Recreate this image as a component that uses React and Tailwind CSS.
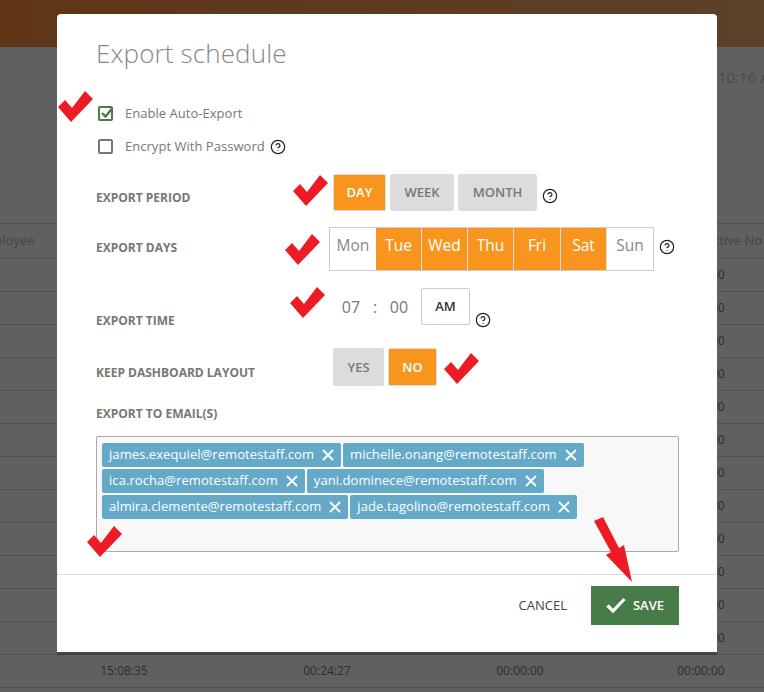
// Modal "Export schedule" sobre la tabla oscurecida
import { CircleHelp, X } from "lucide-react";

const DAYS = [
  { label: "Mon", on: false, w: "w-[46px]" },
  { label: "Tue", on: true, w: "w-[46px]" },
  { label: "Wed", on: true, w: "w-[46px]" },
  { label: "Thu", on: true, w: "w-[46px]" },
  { label: "Fri", on: true, w: "w-[47px]" },
  { label: "Sat", on: true, w: "w-[46px]" },
  { label: "Sun", on: false, w: "flex-1" },
];

const EMAILS = [
  "james.exequiel@remotestaff.com",
  "michelle.onang@remotestaff.com",
  "ica.rocha@remotestaff.com",
  "yani.dominece@remotestaff.com",
  "almira.clemente@remotestaff.com",
  "jade.tagolino@remotestaff.com",
];

const ROWS = Array.from({ length: 12 });

function Help({ className = "" }) {
  return <CircleHelp size={16} strokeWidth={1.8} className={`text-[#222] shrink-0 ${className}`} />;
}

// Marcas rojas dibujadas encima de la captura
function RedTick({ className }) {
  return (
    <svg width="35" height="31" viewBox="0 0 35 31" className={`absolute ${className}`}>
      <polygon points="0,16 7,9 14,17 27,0 35,8 13,31" fill="#ed1c24" />
    </svg>
  );
}

function Label({ children, className = "" }) {
  return <div className={`text-[12px] leading-4 font-bold text-[#777] ${className}`}>{children}</div>;
}

function Toggle({ children, on, className = "" }) {
  return (
    <div
      className={`flex items-center justify-center rounded-[2px] text-[13px] font-semibold border ${
        on ? "bg-[#f8951f] text-white border-[#dddddd]" : "bg-[#dcdcdc] text-[#777] border-[#dcdcdc]"
      } ${className}`}
    >
      {children}
    </div>
  );
}

function Tag({ email }) {
  return (
    <div className="h-6 flex items-center gap-[5px] pl-[7px] pr-[4px] bg-[#65a9c9] rounded-[2px] text-white text-[13px] leading-6 tracking-[0.07px]">
      <span className="-mt-[3px]">{email}</span>
      <X size={18} strokeWidth={2.4} />
    </div>
  );
}

export default function App() {
  return (
    <div className="relative w-[764px] h-[692px] overflow-hidden bg-[#606060] font-['Open_Sans',sans-serif]">
      {/* Pagina de fondo */}
      <div className="h-[47px] bg-gradient-to-r from-[#5f3516] to-[#5c4028]" />
      <div className="h-[125px] border-b border-[#5a5a5a] text-right pt-[19px] -mr-[19px] text-[15px] leading-[22px] text-[#4a4a4a]">
        10:16 AM
      </div>
      <div className="h-[51px]" />
      <div className="h-[36px] flex justify-between items-center border-y border-[#505050] text-[13px] text-[#444] -ml-[25px] -mr-[22px] pr-[24px]">
        <span>Employee</span>
        <span>Active No</span>
      </div>
      {ROWS.map((_, i) => (
        <div key={i} className="h-[33px] border-b border-[#505050]">
          <div className="grid grid-cols-[248px_158px_228px_134px] text-center items-center h-full text-[12px] text-[#2c2c2c]">
            <span />
            <span />
            <span />
            <span>00:00:00</span>
          </div>
        </div>
      ))}
      <div className="h-[33px] border-b border-[#505050] grid grid-cols-[248px_158px_228px_134px] text-center items-center text-[12px] text-[#2c2c2c]">
        <span>15:08:35</span>
        <span>00:24:27</span>
        <span>00:00:00</span>
        <span>00:00:00</span>
      </div>

      {/* Modal */}
      <div className="absolute left-[57px] top-[14px] w-[660px] h-[638px] bg-white rounded-t-[4px] shadow-[0_3px_0_rgba(0,0,0,0.25)]">
        <div className="h-[83px] pl-[39px] pt-[21px] text-[26px] leading-9 font-light text-[#888] tracking-[0.13px]">Export schedule</div>

        <div className="pl-[41px] h-[33px] flex items-center gap-3 text-[13px] text-[#777] tracking-[0.03px]">
          <div className="relative w-[15px] h-[15px] border-2 border-[#477c48] rounded-[2px]">
            <svg width="16" height="14" viewBox="0 0 16 14" className="absolute -left-[1px] -top-[2px]">
              <path d="M3 7 L6.5 10.5 L13.5 2" fill="none" stroke="#477c48" strokeWidth="2.4" />
            </svg>
          </div>
          <span>Enable Auto-Export</span>
        </div>
        <div className="pl-[41px] h-[33px] flex items-center gap-3 text-[13px] text-[#777] tracking-[0.03px]">
          <div className="w-[15px] h-[15px] border-2 border-[#777] rounded-[2px]" />
          <span>Encrypt With Password</span>
          <Help className="-ml-[7px]" />
        </div>

        {/* Periodo */}
        <div className="mt-[11px] pl-[39px] flex">
          <Label className="w-[237px] pt-[16px]">EXPORT PERIOD</Label>
          <div className="flex h-[37px] gap-1">
            <Toggle on className="w-[53px]">DAY</Toggle>
            <Toggle className="w-[64px]">WEEK</Toggle>
            <Toggle className="w-[79px]">MONTH</Toggle>
            <Help className="ml-[1px] mt-[14px]" />
          </div>
        </div>

        {/* Dias */}
        <div className="mt-[16px] pl-[39px] flex">
          <Label className="w-[233px] pt-[13px]">EXPORT DAYS</Label>
          <div className="w-[325px] h-[44px] flex border border-[#cccccc]">
            {DAYS.map((d) => (
              <div
                key={d.label}
                className={`${d.w} flex items-center justify-center pb-[6px] text-[15.5px] ${
                  d.on ? "bg-[#f8951f] text-white border-r border-[#dddddd]" : "text-[#888]"
                }`}
              >
                {d.label}
              </div>
            ))}
          </div>
          <Help className="ml-[5px] mt-[12px]" />
        </div>

        {/* Hora */}
        <div className="mt-[17px] pl-[39px] flex">
          <Label className="w-[237px] pt-[25px]">EXPORT TIME</Label>
          <div className="flex h-[37px] items-center text-[#777] text-[16px]">
            <span className="w-[36px] text-center">07</span>
            <span className="w-[12px] text-center">:</span>
            <span className="w-[36px] text-center">00</span>
            <div className="ml-[4px] w-[49px] h-full flex items-center justify-center border border-[#cccccc] rounded-[2px] bg-white text-[13px] font-semibold text-[#333]">
              AM
            </div>
          </div>
          <Help className="ml-[5px] mt-[24px]" />
        </div>

        {/* Layout */}
        <div className="mt-[19px] pl-[39px] flex">
          <Label className="w-[237px] pt-[17px]">KEEP DASHBOARD LAYOUT</Label>
          <div className="flex h-[38px] gap-1">
            <Toggle className="w-[51px] pt-[1px]">YES</Toggle>
            <Toggle on className="w-[49px] pt-[1px]">NO</Toggle>
          </div>
        </div>

        {/* Correos */}
        <Label className="mt-[20px] ml-[39px]">EXPORT TO EMAIL(S)</Label>
        <div className="mt-[14px] ml-[39px] w-[583px] h-[116px] border border-[#aaaaaa] rounded-[2px] bg-[#f8f8f8] pl-[5px] pt-[6px] flex flex-wrap content-start gap-x-[2px] gap-y-[2px]">
          {EMAILS.map((email) => (
            <Tag key={email} email={email} />
          ))}
        </div>

        {/* Pie */}
        <div className="mt-[22px] border-t border-[#dddddd] pt-[11px] pr-[38px] flex justify-end items-center">
          <span className="mr-[24px] text-[13px] text-[#444] font-medium">CANCEL</span>
          <div className="w-[88px] h-[39px] bg-[#477c48] flex items-center justify-center gap-[7px] text-white text-[13px] font-semibold pt-[1px]">
            <svg width="20" height="16" viewBox="0 0 20 16" className="-mt-[2px]">
              <path d="M1.5 8.5 L7 14 L18.5 2" fill="none" stroke="white" strokeWidth="3.2" />
            </svg>
            <span>SAVE</span>
          </div>
        </div>
      </div>

      {/* Anotaciones rojas */}
      <RedTick className="left-[58px] top-[91px]" />
      <RedTick className="left-[293px] top-[175px]" />
      <RedTick className="left-[285px] top-[234px]" />
      <RedTick className="left-[290px] top-[287px]" />
      <RedTick className="left-[444px] top-[353px]" />
      <RedTick className="left-[87px] top-[526px]" />
      <svg width="50" height="75" viewBox="0 0 50 75" className="absolute left-[590px] top-[514px]">
        <polygon points="4,7 13,3 29,34 34,31 42,68 16,41 21,38" fill="#ed1c24" />
      </svg>
    </div>
  );
}
